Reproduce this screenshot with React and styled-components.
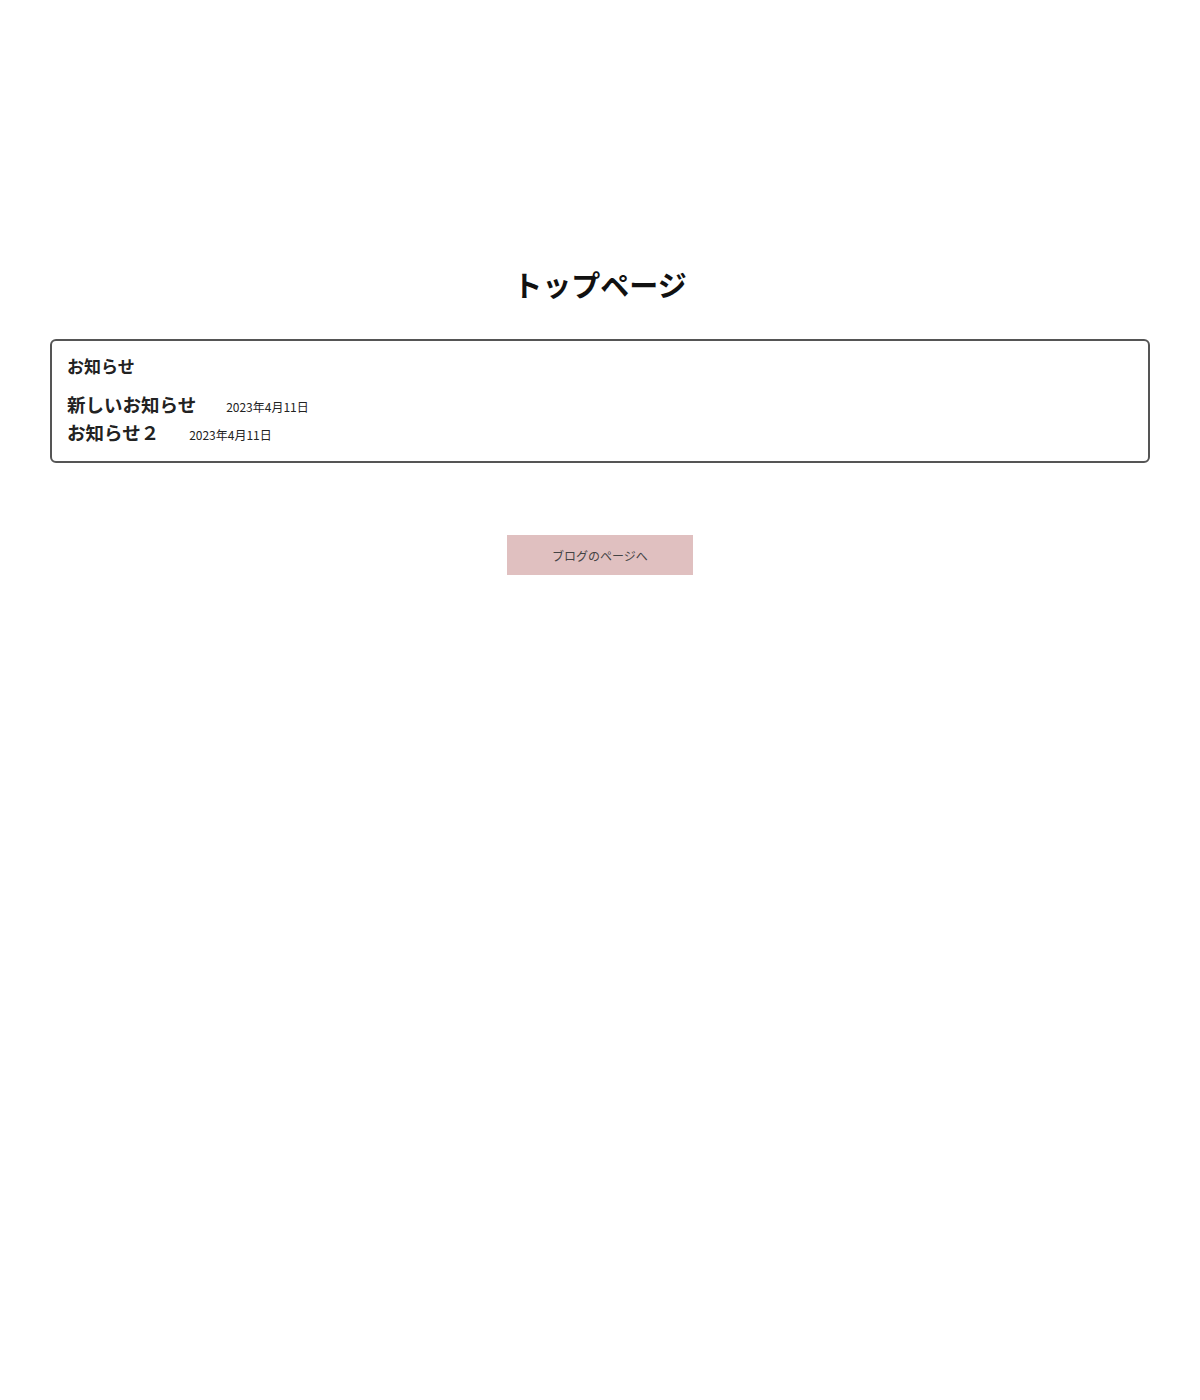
import styled, { createGlobalStyle } from 'styled-components';

const GlobalStyle = createGlobalStyle`
  body {
    margin: 0;
    background: #fff;
    font-family: "Noto Sans CJK JP", "Noto Sans", sans-serif;
    color: #222;
  }
`;

const Page = styled.div`
  padding: 0 50px;
`;

const Title = styled.h1`
  margin: 266px 0 37px;
  text-align: center;
  font-size: 29px;
  font-weight: 700;
  line-height: 36px;
  color: #111;
`;

const NewsBox = styled.section`
  border: 2px solid #555;
  border-radius: 6px;
  padding: 11px 15px 15px;
`;

const NewsHeading = styled.h2`
  margin: 0 0 10px;
  font-size: 17px;
  font-weight: 700;
  line-height: 28px;
`;

const NewsList = styled.ul`
  margin: 0;
  padding: 0;
`;

const NewsItem = styled.li`
  list-style: none;
  display: flex;
  align-items: baseline;
  height: 28px;
  line-height: 28px;
`;

const NewsTitle = styled.span`
  font-size: 18.5px;
  font-weight: 700;
`;

const NewsDate = styled.span`
  margin-left: 30px;
  font-size: 12px;
`;

const ButtonRow = styled.div`
  display: flex;
  justify-content: center;
  margin-top: 72px;
`;

const BlogButton = styled.button`
  width: 186px;
  height: 40px;
  border: none;
  background-color: #e0c0c0;
  color: #444;
  font-family: inherit;
  font-size: 12px;
  cursor: pointer;
`;

const news = [
  { id: 1, title: '新しいお知らせ', date: '2023年4月11日' },
  { id: 2, title: 'お知らせ２', date: '2023年4月11日' },
];

const App = () => {
  return (
    <>
      <GlobalStyle />
      <Page>
        <Title>トップページ</Title>
        <NewsBox>
          <NewsHeading>お知らせ</NewsHeading>
          <NewsList>
            {news.map((item) => (
              <NewsItem key={item.id}>
                <NewsTitle>{item.title}</NewsTitle>
                <NewsDate>{item.date}</NewsDate>
              </NewsItem>
            ))}
          </NewsList>
        </NewsBox>
        <ButtonRow>
          <BlogButton>ブログのページへ</BlogButton>
        </ButtonRow>
      </Page>
    </>
  );
};

export default App;
